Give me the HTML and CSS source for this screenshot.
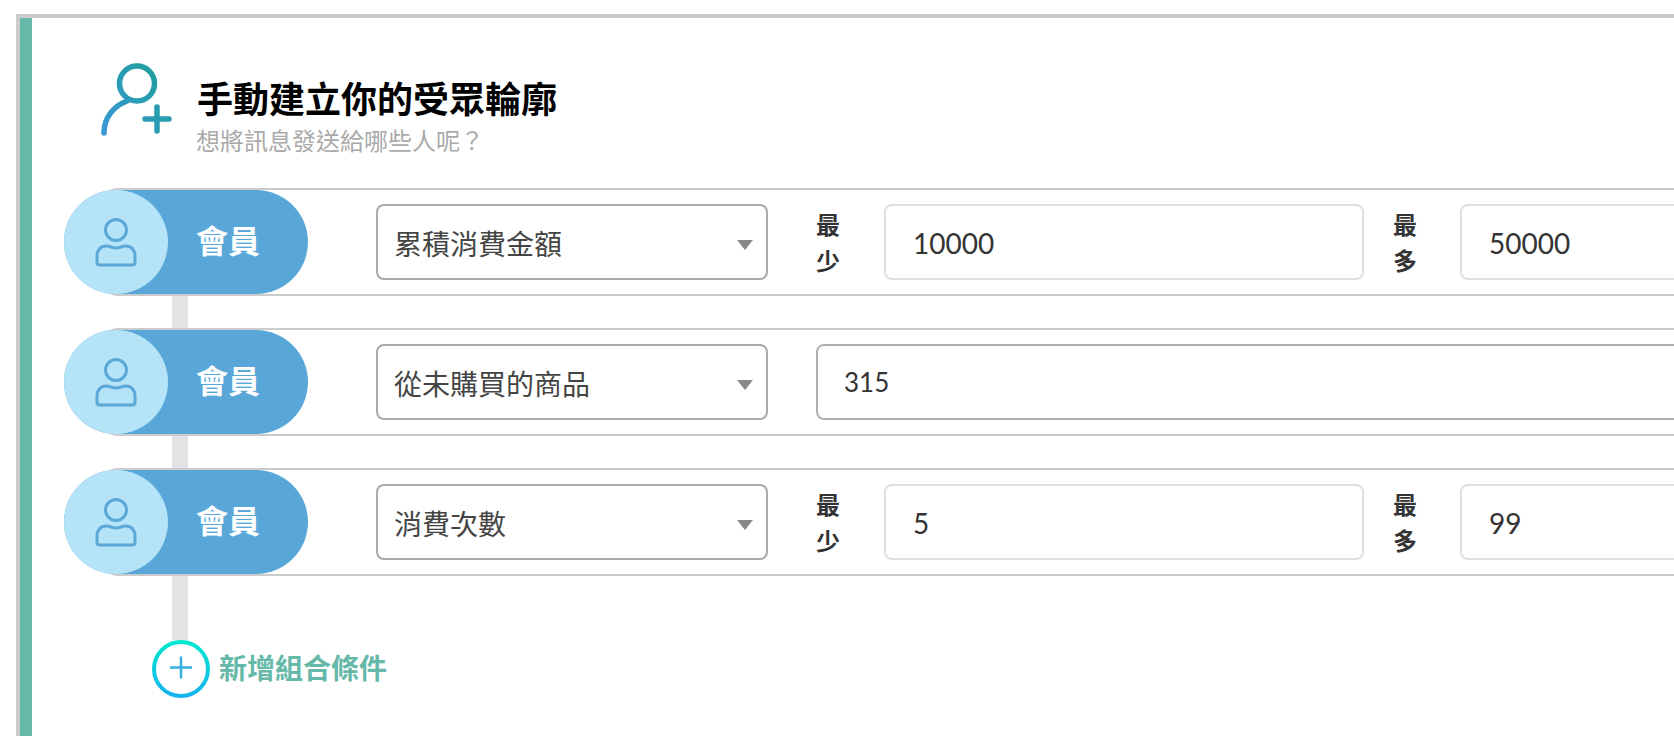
FILE: index.html
```html
<!DOCTYPE html>
<html lang="zh-Hant">
<head>
    <meta charset="UTF-8">
    <meta name="viewport" content="width=device-width, initial-scale=1.0">
    <title>手動建立你的受眾輪廓</title>
    <link rel="stylesheet" href="styles.css">
</head>
<body>

    <div class="frame">
        <div class="panel">

            <!-- Header -->
            <div class="header">
                <svg class="header-icon" viewBox="0 0 72 74" fill="none" stroke="url(#headerGrad)" stroke-width="5.500" stroke-linecap="round">
                    <defs>
                        <linearGradient id="headerGrad" gradientUnits="userSpaceOnUse" x1="0" y1="70" x2="70" y2="20">
                            <stop offset="0" stop-color="#3a97d6"/>
                            <stop offset="1" stop-color="#1f9f9c"/>
                        </linearGradient>
                    </defs>
                    <circle cx="37" cy="20.500" r="17.500"/>
                    <path d="M4 70 C4 54 14 43 27 38"/>
                    <path d="M45 56 H69 M57 44 V68"/>
                </svg>
                <div class="header-text">
                    <h1>手動建立你的受眾輪廓</h1>
                    <p>想將訊息發送給哪些人呢？</p>
                </div>
            </div>

            <!-- Row 1 -->
            <div class="row">
                <div class="pill">
                    <div class="pill-icon">
                        <svg viewBox="0 0 44 50" fill="none" stroke="#5aa8d8" stroke-width="3">
                            <circle cx="22" cy="13" r="10.500"/>
                            <path d="M12 29 C16 29 18 31 22 31 C26 31 28 29 32 29 C37 29 41 33 41 39 V45 C41 47 40 48 38 48 H6 C4 48 3 47 3 45 V39 C3 33 7 29 12 29 Z"/>
                        </svg>
                    </div>
                    <span class="pill-label">會員</span>
                </div>
                <div class="select">累積消費金額</div>
                <div class="range-label">最少</div>
                <div class="field">10000</div>
                <div class="range-label range-label-max">最多</div>
                <div class="field">50000</div>
            </div>
            <div class="connector"></div>

            <!-- Row 2 -->
            <div class="row">
                <div class="pill">
                    <div class="pill-icon">
                        <svg viewBox="0 0 44 50" fill="none" stroke="#5aa8d8" stroke-width="3">
                            <circle cx="22" cy="13" r="10.500"/>
                            <path d="M12 29 C16 29 18 31 22 31 C26 31 28 29 32 29 C37 29 41 33 41 39 V45 C41 47 40 48 38 48 H6 C4 48 3 47 3 45 V39 C3 33 7 29 12 29 Z"/>
                        </svg>
                    </div>
                    <span class="pill-label">會員</span>
                </div>
                <div class="select">從未購買的商品</div>
                <div class="field field-wide">315</div>
            </div>
            <div class="connector"></div>

            <!-- Row 3 -->
            <div class="row">
                <div class="pill">
                    <div class="pill-icon">
                        <svg viewBox="0 0 44 50" fill="none" stroke="#5aa8d8" stroke-width="3">
                            <circle cx="22" cy="13" r="10.500"/>
                            <path d="M12 29 C16 29 18 31 22 31 C26 31 28 29 32 29 C37 29 41 33 41 39 V45 C41 47 40 48 38 48 H6 C4 48 3 47 3 45 V39 C3 33 7 29 12 29 Z"/>
                        </svg>
                    </div>
                    <span class="pill-label">會員</span>
                </div>
                <div class="select">消費次數</div>
                <div class="range-label">最少</div>
                <div class="field">5</div>
                <div class="range-label range-label-max">最多</div>
                <div class="field">99</div>
            </div>
            <div class="connector connector-last"></div>

            <!-- Add condition -->
            <div class="add">
                <svg class="add-icon" viewBox="0 0 58 58" fill="none">
                    <defs>
                        <linearGradient id="addGrad" x1="0" y1="0" x2="0" y2="1">
                            <stop offset="0" stop-color="#00e8d0"/>
                            <stop offset="1" stop-color="#14b4ee"/>
                        </linearGradient>
                    </defs>
                    <circle cx="29" cy="29" r="27" stroke="url(#addGrad)" stroke-width="4"/>
                    <path d="M18 27.500 H40 M29 16.500 V38.500" stroke="#35aee2" stroke-width="2.500"/>
                </svg>
                <span class="add-label">新增組合條件</span>
            </div>

        </div>
    </div>

</body>
</html>
```

FILE: styles.css
```css
body {
    margin: 0;
    padding: 14px 0 0 16px;
    height: 736px;
    box-sizing: border-box;
    overflow: hidden;
    background-color: #fff;
    font-family: Lato, "Noto Sans CJK TC", sans-serif;
    color: #444;
}
.frame {
    width: 2200px;
    height: 100%;
    border-top: 4px solid #ccc;
    border-left: 4px solid #ccc;
    box-sizing: border-box;
}
.panel {
    height: 100%;
    box-sizing: border-box;
    border-left: 12px solid #66b9a9;
    padding-left: 32px;
}
.header {
    display: flex;
    height: 170px;
    padding: 45px 0 0 36px;
    box-sizing: border-box;
}
.header-icon {
    width: 72px;
    height: 74px;
    flex: none;
}
.header-text {
    margin-left: 25px;
}
.header-text h1 {
    margin: 10px 0 0;
    font-size: 36px;
    line-height: 52px;
    font-weight: 700;
    color: #000;
}
.header-text p {
    margin: -2px 0 0 -1px;
    font-size: 24px;
    line-height: 36px;
    color: #aaa;
}
.row {
    display: flex;
    align-items: center;
    height: 108px;
    margin-left: 40px;
    box-sizing: border-box;
    border-top: 2px solid #ccc;
    border-bottom: 2px solid #ccc;
    border-radius: 14px 0 0 14px;
}
.pill {
    display: flex;
    align-items: center;
    flex: none;
    width: 244px;
    height: 104px;
    margin-left: -40px;
    border-radius: 52px;
    background-color: #58a7d8;
}
.pill-icon {
    display: flex;
    align-items: center;
    justify-content: center;
    width: 104px;
    height: 104px;
    border-radius: 50%;
    background-color: #b5e3f7;
}
.pill-icon svg {
    width: 44px;
    height: 50px;
}
.pill-label {
    margin-left: 28px;
    padding-bottom: 7px;
    font-size: 32px;
    font-weight: 700;
    color: #fff;
}
.select {
    position: relative;
    flex: none;
    width: 392px;
    height: 76px;
    margin-left: 68px;
    padding-left: 16px;
    box-sizing: border-box;
    border: 2px solid #aaa;
    border-radius: 8px;
    font-size: 28px;
    line-height: 76px;
}
.select::after {
    content: "";
    position: absolute;
    right: 13px;
    top: 34px;
    border-left: 8px solid transparent;
    border-right: 8px solid transparent;
    border-top: 10px solid #888;
}
.range-label {
    flex: none;
    width: 24px;
    margin-left: 48px;
    padding-top: 2px;
    font-size: 24px;
    line-height: 36px;
    font-weight: 700;
    color: #333;
}
.range-label-max {
    margin-left: 29px;
}
.field {
    flex: none;
    width: 480px;
    height: 76px;
    margin-left: 44px;
    padding-left: 27px;
    box-sizing: border-box;
    border: 2px solid #e0e0e0;
    border-radius: 8px;
    font-size: 28px;
    line-height: 74px;
    color: #333;
}
.range-label-max + .field {
    margin-left: 43px;
}
.field-wide {
    width: 1000px;
    margin-left: 48px;
    padding-left: 26px;
    border-color: #b0b0b0;
    font-size: 26px;
    line-height: 73px;
}
.connector {
    width: 16px;
    height: 32px;
    margin-left: 108px;
    background-color: #e3e3e3;
}
.connector-last {
    height: 64px;
}
.add {
    display: flex;
    align-items: center;
    margin-left: 88px;
}
.add-icon {
    width: 58px;
    height: 58px;
    flex: none;
}
.add-label {
    margin-left: 9px;
    padding-bottom: 4px;
    font-size: 28px;
    font-weight: 700;
    color: #66b9a9;
}
```
